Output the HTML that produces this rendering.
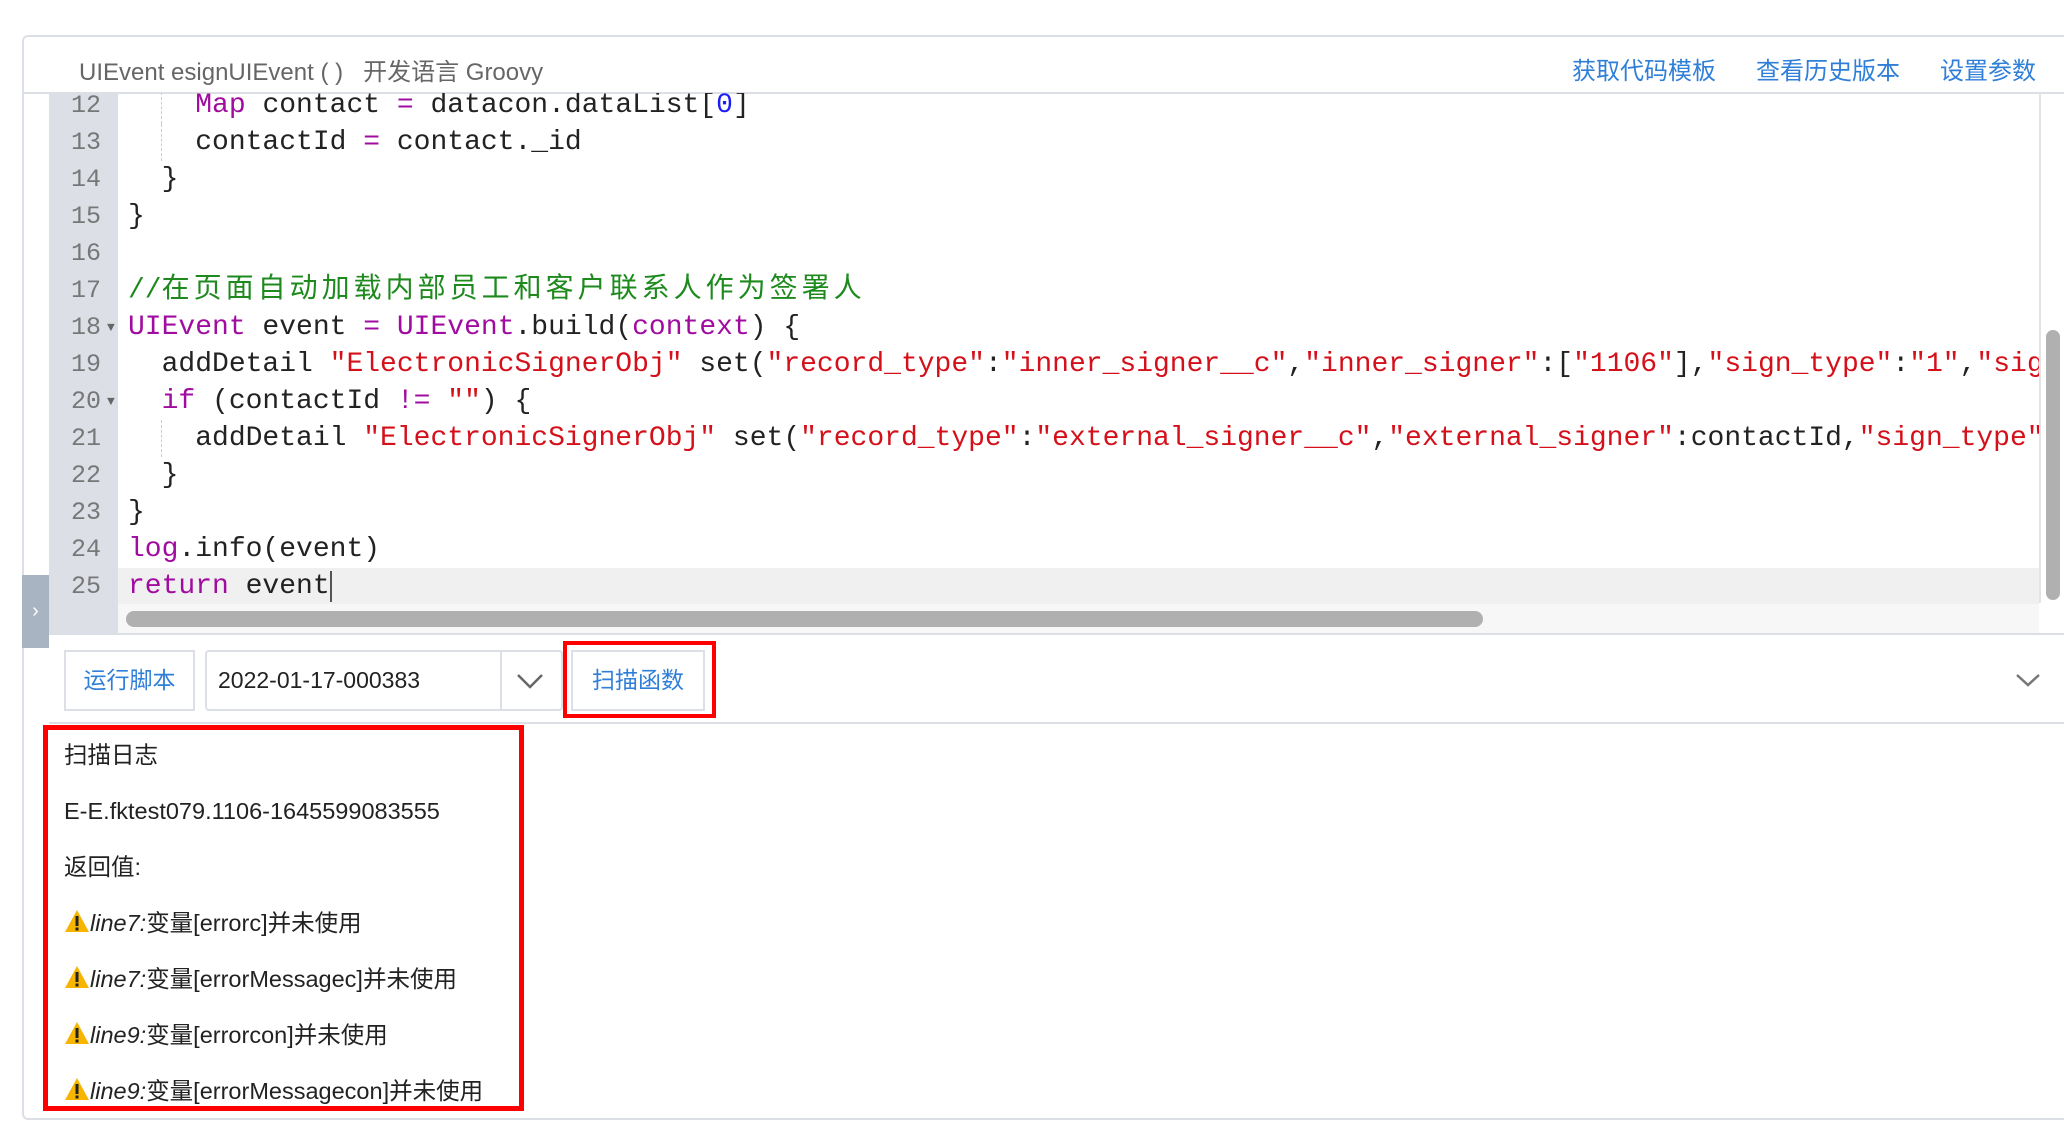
<!DOCTYPE html>
<html><head><meta charset="utf-8"><style>
*{margin:0;padding:0;box-sizing:border-box}
body{width:2064px;height:1136px;background:#fff;position:relative;overflow:hidden;font-family:"Liberation Sans","Noto Sans CJK SC",sans-serif}
.card{position:absolute;left:22px;top:35px;width:2060px;height:1085px;border:2px solid #dcdfe6;border-radius:6px}
.hdr{position:absolute;top:52px;font-size:24px;color:#666}
.lnk{position:absolute;top:51px;font-size:24px;color:#2f7fd8}
.hline{position:absolute;left:24px;right:0;height:2px;background:#dcdfe6}
.gutter{position:absolute;left:49px;top:93px;width:69px;height:541px;background:#dcdfe6}
.code{position:absolute;left:49px;top:93px;width:1990px;height:541px;overflow:hidden}
.rows{position:absolute;top:-6px;left:0;right:0}
.row{height:37px;line-height:37px;position:relative;font-family:"Liberation Mono","Noto Sans CJK SC",monospace;font-size:28px;white-space:pre;color:#222}
.num{position:absolute;left:0;width:52px;text-align:right;color:#777;font-size:25px}
.txt{position:absolute;left:79px}
.k{color:#a10ca0}.s{color:#d4101a}.c{color:#1e8a1e}.n{color:#1c1cf5}
.fold{position:absolute;left:58px;top:0;font-size:13px;color:#666}
.guide{position:absolute;left:112px;top:0;height:37px;border-left:1px dashed #ccc}
.w{display:inline-block;width:26px;height:24px;vertical-align:-2px}
</style></head><body>
<div class="card"></div>
<div class="hdr" style="left:79px">UIEvent esignUIEvent ( )&nbsp;&nbsp;&nbsp;开发语言 Groovy</div>
<div class="lnk" style="left:1572px">获取代码模板</div>
<div class="lnk" style="left:1756px">查看历史版本</div>
<div class="lnk" style="left:1940px">设置参数</div>
<div class="hline" style="top:92px"></div>
<div class="gutter"></div>
<div class="code"><div class="rows">
<div class="row"><span class="num">12</span><span class="guide"></span><span class="txt">    <span class="k">Map</span> contact <span class="k">=</span> datacon.dataList[<span class="n">0</span>]</span></div>
<div class="row"><span class="num">13</span><span class="guide"></span><span class="txt">    contactId <span class="k">=</span> contact._id</span></div>
<div class="row"><span class="num">14</span><span class="txt">  }</span></div>
<div class="row"><span class="num">15</span><span class="txt">}</span></div>
<div class="row"><span class="num">16</span><span class="txt"></span></div>
<div class="row"><span class="num">17</span><span class="txt c">//<span style="letter-spacing:4px">在页面自动加载内部员工和客户联系人作为签署人</span></span></div>
<div class="row"><span class="num">18</span><span class="fold">▼</span><span class="txt"><span class="k">UIEvent</span> event <span class="k">=</span> <span class="k">UIEvent</span>.build(<span class="k">context</span>) {</span></div>
<div class="row"><span class="num">19</span><span class="txt">  addDetail <span class="s">"ElectronicSignerObj"</span> set(<span class="s">"record_type"</span>:<span class="s">"inner_signer__c"</span>,<span class="s">"inner_signer"</span>:[<span class="s">"1106"</span>],<span class="s">"sign_type"</span>:<span class="s">"1"</span>,<span class="s">"sign_order"</span>)</span></div>
<div class="row"><span class="num">20</span><span class="fold">▼</span><span class="txt">  <span class="k">if</span> (contactId <span class="k">!=</span> <span class="s">""</span>) {</span></div>
<div class="row"><span class="num">21</span><span class="guide"></span><span class="txt">    addDetail <span class="s">"ElectronicSignerObj"</span> set(<span class="s">"record_type"</span>:<span class="s">"external_signer__c"</span>,<span class="s">"external_signer"</span>:contactId,<span class="s">"sign_type"</span>)</span></div>
<div class="row"><span class="num">22</span><span class="txt">  }</span></div>
<div class="row"><span class="num">23</span><span class="txt">}</span></div>
<div class="row"><span class="num">24</span><span class="txt"><span class="k">log</span>.info(event)</span></div>
<div class="row" style="background:linear-gradient(to right,#dcdfe6 69px,#f0f0f0 69px)"><span class="num">25</span><span class="txt"><span class="k">return</span> event<span style="border-left:2px solid #555"></span></span></div>
</div></div>
<div style="position:absolute;left:2039px;top:93px;width:2px;height:510px;background:#e4e4e4"></div>
<div style="position:absolute;left:2046px;top:330px;width:14px;height:270px;border-radius:7px;background:#b0b0b0"></div>
<div style="position:absolute;left:118px;top:604px;width:1921px;height:30px;background:#f7f7f7"></div>
<div style="position:absolute;left:126px;top:611px;width:1357px;height:16px;border-radius:8px;background:#b0b0b0"></div>
<div style="position:absolute;left:22px;top:575px;width:27px;height:73px;background:#a9b4c2;color:#fff;font-size:20px;text-align:center;line-height:73px">›</div>
<div class="hline" style="top:633px;left:49px"></div>
<div style="position:absolute;left:64px;top:650px;width:131px;height:61px;border:2px solid #dcdfe6;color:#2f7fd8;font-size:23px;line-height:57px;text-align:center">运行脚本</div>
<div style="position:absolute;left:205px;top:650px;width:358px;height:61px;border:2px solid #dcdfe6;border-radius:4px;font-size:23px;line-height:57px;padding-left:11px;color:#222">2022-01-17-000383</div>
<div style="position:absolute;left:500px;top:650px;width:2px;height:61px;background:#dcdfe6"></div>
<svg style="position:absolute;left:516px;top:672px" width="28" height="18"><path d="M2 3 L14 15 L26 3" fill="none" stroke="#666" stroke-width="2.5"/></svg>
<div style="position:absolute;left:563px;top:641px;width:153px;height:77px;border:4px solid #f00"></div>
<div style="position:absolute;left:571px;top:650px;width:134px;height:61px;border:2px solid #dcdfe6;color:#2f7fd8;font-size:23px;line-height:57px;text-align:center">扫描函数</div>
<svg style="position:absolute;left:2015px;top:672px" width="26" height="16"><path d="M2 3 L13 13 L24 3" fill="none" stroke="#777" stroke-width="2.5"/></svg>
<div class="hline" style="top:722px;left:49px"></div>
<div style="position:absolute;left:43px;top:725px;width:481px;height:386px;border:5px solid #f00"></div>
<div style="position:absolute;left:64px;top:738px;font-size:23.5px;color:#222;line-height:56px;white-space:nowrap">
<div style="height:56px;margin-top:-11px">扫描日志</div>
<div>E-E.fktest079.1106-1645599083555</div>
<div>返回值:</div>
<div><svg class="w" viewBox="0 0 26 24"><path d="M13 1 L25 23 L1 23 Z" fill="#f7b500"/><rect x="11.5" y="7" width="3" height="10" fill="#222"/><rect x="11.5" y="18.5" width="3" height="3" fill="#222"/></svg><i>line7:</i>变量[errorc]并未使用</div>
<div><svg class="w" viewBox="0 0 26 24"><path d="M13 1 L25 23 L1 23 Z" fill="#f7b500"/><rect x="11.5" y="7" width="3" height="10" fill="#222"/><rect x="11.5" y="18.5" width="3" height="3" fill="#222"/></svg><i>line7:</i>变量[errorMessagec]并未使用</div>
<div><svg class="w" viewBox="0 0 26 24"><path d="M13 1 L25 23 L1 23 Z" fill="#f7b500"/><rect x="11.5" y="7" width="3" height="10" fill="#222"/><rect x="11.5" y="18.5" width="3" height="3" fill="#222"/></svg><i>line9:</i>变量[errorcon]并未使用</div>
<div><svg class="w" viewBox="0 0 26 24"><path d="M13 1 L25 23 L1 23 Z" fill="#f7b500"/><rect x="11.5" y="7" width="3" height="10" fill="#222"/><rect x="11.5" y="18.5" width="3" height="3" fill="#222"/></svg><i>line9:</i>变量[errorMessagecon]并未使用</div>
</div>
</body></html>
